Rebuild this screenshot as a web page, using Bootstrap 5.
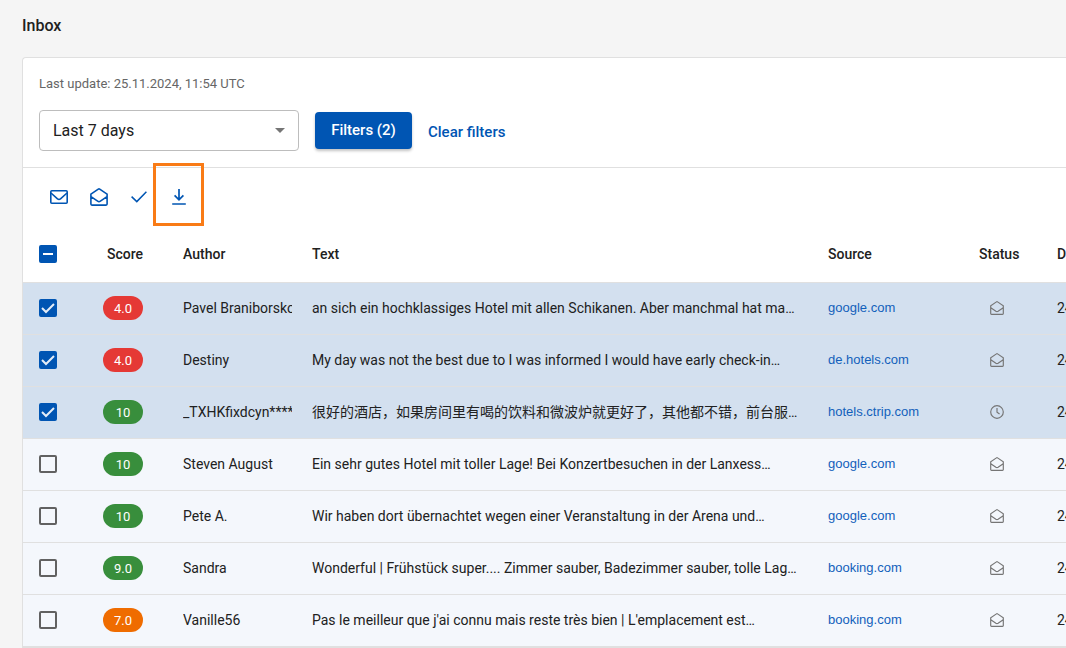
<!DOCTYPE html>
<html lang="en">
<head>
<meta charset="utf-8">
<meta name="viewport" content="width=device-width, initial-scale=1">
<title>Inbox</title>
<link href="https://cdn.jsdelivr.net/npm/bootstrap@5.3.0/dist/css/bootstrap.min.css" rel="stylesheet">
<style>
  :root { --brand: #0055b3; --ink: #212121; --line: #e0e0e0; }
  body { background: #f5f5f5; color: var(--ink); font-family: Roboto, "Noto Sans CJK SC", sans-serif; font-size: 14px; line-height: 20px; overflow-x: hidden; }
  .page-title { font-size: 16px; line-height: 24px; font-weight: 500; padding: 14px 0 19px; margin: 0; }
  .inbox-page { padding-left: 22px; }
  .inbox-card { border: 1px solid var(--line); border-right: 0; border-radius: 4px 0 0 0; --bs-card-color: var(--ink); overflow: hidden; }
  .filter-bar { padding: 16px; border-bottom: 1px solid var(--line); }
  .updated { font-size: 13px; line-height: 20px; color: #666; margin-bottom: 16px; }
  .period { width: 260px; height: 41px; padding: 0 40px 0 13px; font-size: 16px; color: var(--ink); border-color: #bdbdbd; border-radius: 4px;
    background-image: url("data:image/svg+xml,%3Csvg xmlns='http://www.w3.org/2000/svg' viewBox='0 0 10 5'%3E%3Cpath fill='%23757575' d='M0 0h10L5 5z'/%3E%3C/svg%3E");
    background-size: 10px 5px; background-position: right 13px center; }
  .btn-filters { --bs-btn-bg: var(--brand); --bs-btn-color: #fff; --bs-btn-hover-bg: #004794; --bs-btn-hover-color: #fff; --bs-btn-font-weight: 500; --bs-btn-border-width: 0; --bs-btn-border-radius: 4px;
    width: 97px; height: 37px; padding: 0 0 2px; font-size: 15px; line-height: 20px; box-shadow: 0 2px 3px rgba(0,0,0,.24); }
  .btn-clear { --bs-btn-color: var(--brand); --bs-btn-hover-color: #004794; --bs-btn-border-width: 0; --bs-btn-font-weight: 500; padding: 2px 0 0; font-size: 15px; line-height: 20px; }
  .toolbar-row { height: 58px; padding: 0 16px; }
  .tool { width: 40px; height: 40px; padding: 0; border: 0; color: var(--brand); position: relative; }
  .tool svg, .state svg { display: block; margin: auto; fill: none; stroke: currentColor; }
  .spot { position: absolute; inset: -14px -5px -9px -6px; border: 3px solid #f97b16; pointer-events: none; }
  .reviews { table-layout: fixed; margin: 0; --bs-table-color: var(--ink); --bs-table-bg: transparent; border-color: var(--line); }
  .reviews th, .reviews td { padding: 0 10px; height: 52px; vertical-align: middle; white-space: nowrap; overflow: hidden; border-bottom: 1px solid var(--line); color: var(--ink); }
  .reviews th { height: 56px; font-weight: 500; }
  .reviews th:first-child, .reviews td:first-child { padding-left: 16px; }
  .reviews tbody td { background: #f4f7fc; }
  .reviews tbody tr.picked td { background: #d3e0ef; }
  .reviews th.score-head { padding-left: 14px; }
  .clip { overflow: hidden; }
  .c-check { width: 70px; } .c-score { width: 80px; } .c-author { width: 129px; }
  .c-source { width: 151px; } .c-status { width: 78px; } .c-date { width: 19px; }
  .reviews td:last-child, .reviews th:last-child { padding-right: 0; }
  .pick { display: block; width: 18px; height: 18px; margin: 0; border: 2px solid #616161; border-radius: 2px; background-color: transparent; }
  .pick.form-check-input[type=checkbox] { border-radius: 2px; }
  .pick:checked, .pick:indeterminate { background-color: var(--brand) !important; border-color: var(--brand) !important; background-size: 18px 18px; background-position: center; background-origin: border-box; }
  .pick:checked[type=checkbox] { background-image: url("data:image/svg+xml,%3Csvg xmlns='http://www.w3.org/2000/svg' viewBox='0 0 18 18'%3E%3Cpath fill='none' stroke='%23e4edf7' stroke-width='2' d='M3 9l4 4 8-8'/%3E%3C/svg%3E"); }
  .pick:indeterminate[type=checkbox] { background-image: url("data:image/svg+xml,%3Csvg xmlns='http://www.w3.org/2000/svg' viewBox='0 0 18 18'%3E%3Cpath stroke='white' stroke-width='2' d='M4 9h10'/%3E%3C/svg%3E"); }
  .rating { display: block; width: 40px; height: 24px; line-height: 25px; padding: 0; font-size: 13px; font-weight: 400; }
  .rating-low { background: #e53935; } .rating-mid { background: #ef6c00; } .rating-high { background: #388e3c; }
  .site { display: block; color: #1260bb; text-decoration: none; font: 13px/20px "Liberation Sans", Arial, sans-serif; }
  .state { width: 36px; color: #757575; }
</style>
</head>
<body>
<svg class="d-none" aria-hidden="true">
  <symbol id="mail-open" viewBox="0 0 18 18"><path d="M.9 6.2V16.1q0 1 1 1h14.2q1 0 1-1V6.2L9.7 1.1q-.7-.5-1.4 0zM1 8.6l6.6 4.6q1.4.9 2.8 0L17 8.6"/></symbol>
  <symbol id="clock" viewBox="0 0 18 18"><circle cx="9" cy="9" r="8.1"/><path d="M9 4v5.3l3.3 2.3"/></symbol>
</svg>
<main class="inbox-page">
  <h1 class="page-title">Inbox</h1>
  <section class="card inbox-card">
    <div class="filter-bar">
      <p class="updated">Last update: 25.11.2024, 11:54 UTC</p>
      <div class="d-flex align-items-center gap-3">
        <select class="form-select period" aria-label="Period"><option>Last 7 days</option></select>
        <button type="button" class="btn btn-filters">Filters (2)</button>
        <button type="button" class="btn btn-clear">Clear filters</button>
      </div>
    </div>
    <div class="toolbar-row d-flex align-items-center">
      <button type="button" class="btn tool" aria-label="Mark as unread"><svg width="18" height="14" viewBox="0 0 18 14" stroke-width="1.6"><rect x=".8" y=".8" width="16.4" height="12.4" rx="1"/><path d="M1 3l6.5 5.8q1.5 1.1 3 0L17 3"/></svg></button>
      <button type="button" class="btn tool" aria-label="Mark as read"><svg width="18" height="18" stroke-width="1.6"><use href="#mail-open"/></svg></button>
      <button type="button" class="btn tool" aria-label="Mark as done"><svg width="16" height="12" viewBox="0 0 16 12" stroke-width="1.5"><path d="M.6 5.6l5.2 5L15.4.8"/></svg></button>
      <button type="button" class="btn tool" aria-label="Download"><svg width="14" height="16" viewBox="0 0 14 16" stroke-width="1.7"><path d="M7 0v10.5M2.6 6.3L7 10.8l4.4-4.5M.2 15h13.6"/></svg><span class="spot"></span></button>
    </div>
    <table class="table reviews">
      <colgroup><col class="c-check"><col class="c-score"><col class="c-author"><col><col class="c-source"><col class="c-status"><col class="c-date"></colgroup>
      <thead><tr><th><input class="form-check-input pick" type="checkbox" id="all" aria-label="Select all"></th><th class="score-head">Score</th><th>Author</th><th>Text</th><th>Source</th><th>Status</th><th>Date</th></tr></thead>
      <tbody>
        <tr class="picked"><td><input class="form-check-input pick" type="checkbox" checked aria-label="Select Pavel"></td><td><span class="badge rounded-pill rating rating-low">4.0</span></td><td><div class="clip">Pavel Braniborskos</div></td><td><div class="clip">an sich ein hochklassiges Hotel mit allen Schikanen. Aber manchmal hat ma…</div></td><td><a class="site" href="#">google.com</a></td><td><div class="state"><svg width="14" height="14" stroke-width="1.5"><use href="#mail-open"/></svg></div></td><td>24.11.2024</td></tr>
        <tr class="picked"><td><input class="form-check-input pick" type="checkbox" checked aria-label="Select Destiny"></td><td><span class="badge rounded-pill rating rating-low">4.0</span></td><td><div class="clip">Destiny</div></td><td><div class="clip">My day was not the best due to I was informed I would have early check-in…</div></td><td><a class="site" href="#">de.hotels.com</a></td><td><div class="state"><svg width="14" height="14" stroke-width="1.5"><use href="#mail-open"/></svg></div></td><td>24.11.2024</td></tr>
        <tr class="picked"><td><input class="form-check-input pick" type="checkbox" checked aria-label="Select _TXHKfixdcyn"></td><td><span class="badge rounded-pill rating rating-high">10</span></td><td><div class="clip">_TXHKfixdcyn******</div></td><td><div class="clip" lang="zh-CN">很好的酒店，如果房间里有喝的饮料和微波炉就更好了，其他都不错，前台服…</div></td><td><a class="site" href="#">hotels.ctrip.com</a></td><td><div class="state"><svg width="14" height="14" stroke-width="1.5"><use href="#clock"/></svg></div></td><td>24.11.2024</td></tr>
        <tr><td><input class="form-check-input pick" type="checkbox" aria-label="Select Steven August"></td><td><span class="badge rounded-pill rating rating-high">10</span></td><td><div class="clip">Steven August</div></td><td><div class="clip">Ein sehr gutes Hotel mit toller Lage! Bei Konzertbesuchen in der Lanxess…</div></td><td><a class="site" href="#">google.com</a></td><td><div class="state"><svg width="14" height="14" stroke-width="1.5"><use href="#mail-open"/></svg></div></td><td>24.11.2024</td></tr>
        <tr><td><input class="form-check-input pick" type="checkbox" aria-label="Select Pete A."></td><td><span class="badge rounded-pill rating rating-high">10</span></td><td><div class="clip">Pete A.</div></td><td><div class="clip">Wir haben dort übernachtet wegen einer Veranstaltung in der Arena und…</div></td><td><a class="site" href="#">google.com</a></td><td><div class="state"><svg width="14" height="14" stroke-width="1.5"><use href="#mail-open"/></svg></div></td><td>24.11.2024</td></tr>
        <tr><td><input class="form-check-input pick" type="checkbox" aria-label="Select Sandra"></td><td><span class="badge rounded-pill rating rating-high">9.0</span></td><td><div class="clip">Sandra</div></td><td><div class="clip">Wonderful | Frühstück super.... Zimmer sauber, Badezimmer sauber, tolle Lag…</div></td><td><a class="site" href="#">booking.com</a></td><td><div class="state"><svg width="14" height="14" stroke-width="1.5"><use href="#mail-open"/></svg></div></td><td>24.11.2024</td></tr>
        <tr><td><input class="form-check-input pick" type="checkbox" aria-label="Select Vanille56"></td><td><span class="badge rounded-pill rating rating-mid">7.0</span></td><td><div class="clip">Vanille56</div></td><td><div class="clip">Pas le meilleur que j'ai connu mais reste très bien | L'emplacement est…</div></td><td><a class="site" href="#">booking.com</a></td><td><div class="state"><svg width="14" height="14" stroke-width="1.5"><use href="#mail-open"/></svg></div></td><td>24.11.2024</td></tr>
      </tbody>
    </table>
  </section>
</main>
<script src="https://cdn.jsdelivr.net/npm/bootstrap@5.3.0/dist/js/bootstrap.bundle.min.js"></script>
<script>document.getElementById('all').indeterminate = true;</script>
</body>
</html>
